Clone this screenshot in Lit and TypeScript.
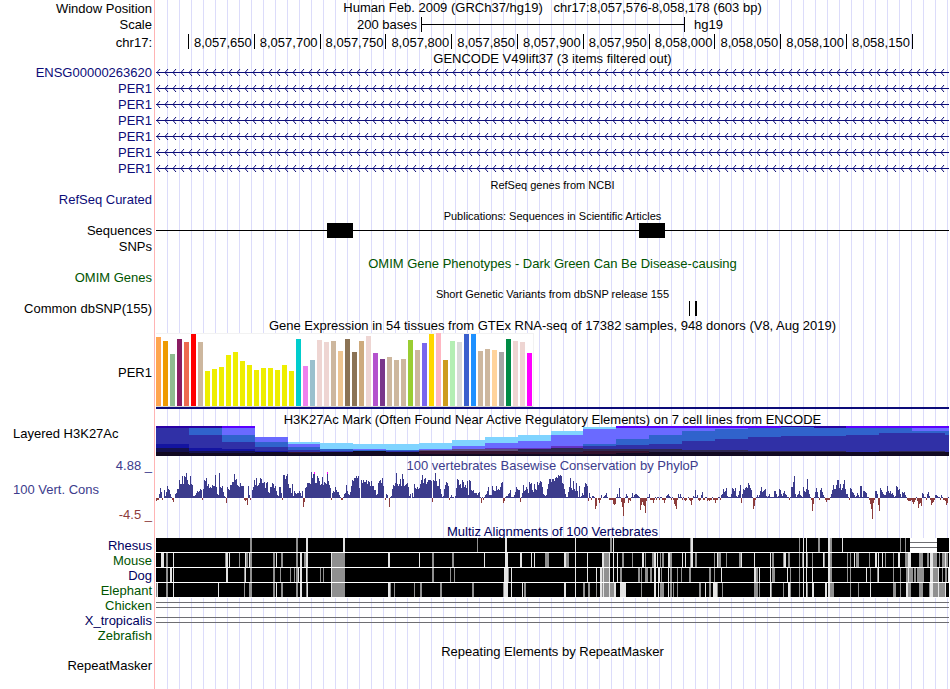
import { LitElement, html, svg, css, nothing, type TemplateResult } from "lit";
import { customElement } from "lit/decorators.js";

/** Left edge of the data area in image coordinates, and its width in base units. */
const LEFT = 156;
const SPAN = 793;

const GENES = ["ENSG00000263620", "PER1", "PER1", "PER1", "PER1", "PER1", "PER1"];

const POSITIONS = [
  "8,057,650", "8,057,700", "8,057,750", "8,057,800", "8,057,850", "8,057,900",
  "8,057,950", "8,058,000", "8,058,050", "8,058,100", "8,058,150",
];

/** GTEx tissues: median expression and tissue colour. */
const TISSUES: [number, string][] = [
  [69, "#ffa54f"], [65, "#ee9a00"], [52, "#8fbc8f"], [67, "#8b1c62"], [64, "#ee6a50"], [72, "#ff0000"],
  [64, "#cdb79e"], [35, "#eeee00"], [37, "#eeee00"], [39, "#eeee00"], [51, "#eeee00"], [54, "#eeee00"],
  [45, "#eeee00"], [41, "#eeee00"], [36, "#eeee00"], [38, "#eeee00"], [38, "#eeee00"], [36, "#eeee00"],
  [41, "#eeee00"], [35, "#eeee00"], [67, "#00cdcd"], [40, "#ee82ee"], [46, "#9ac0cd"], [66, "#eed5d2"],
  [64, "#eed5d2"], [65, "#cdb79e"], [55, "#eec591"], [67, "#8b7355"], [54, "#8b7355"], [65, "#cdaa7d"],
  [70, "#eed5d2"], [53, "#b452cd"], [47, "#7a378b"], [49, "#cdb79e"], [46, "#cdb79e"], [47, "#cdb79e"],
  [66, "#9acd32"], [56, "#cdb79e"], [63, "#7a67ee"], [72, "#ffd700"], [73, "#ffb6c1"], [46, "#cd9b1d"],
  [65, "#b4eeb4"], [64, "#d9d9d9"], [72, "#3a5fcd"], [72, "#1e90ff"], [55, "#cdb79e"], [57, "#cdb79e"],
  [56, "#ffd39b"], [54, "#a6a6a6"], [67, "#008b45"], [65, "#eed5d2"], [64, "#eed5d2"], [53, "#ff00ff"],
];

/** Colours of the overlapping H3K27Ac cell-line signals. */
const INK: Record<string, string> = {
  s: "#80d4ff", v: "#6a6aff", b: "#3063cc", n: "#3030a6", d: "#1414a0", k: "#15124e",
  p: "#5c00ff", q: "#2a00a4", g: "#5c4f7c", m: "#6432c4", w: "#2e2850", r: "#34122e", x: "#120a22",
};

/** Each bin: start, then layers as colour + top, each running down to the next one. */
const H3K = [
  "156 q0 n2 d18 k22 x26", "189 q0 b2 n9 d22 k25 x27", "222 p0 v2 b9 n16 d23 k25 x27",
  "255 v11 b16 n21 d25 x26", "288 s16 v18 b21 n24 r26 x27", "320 s17 b23 n25 x26",
  "353 s18 v23 b24 x25", "386 s18 b24 n25 x26", "419 s17 v23 g24 r25 x28",
  "452 s14 v20 g23 r25 x28", "485 s11 v17 m22 g23 r25 x28", "518 s9 v15 m22 w23 r26 x28",
  "551 s5 v9 m20 w22 r26 x28", "583 s1 v3 b18 n20 w23 r25 x28", "616 p0 v2 b13 n19 w23 r25 x27",
  "649 p0 v2 b9 n18 w23 x26", "682 p0 v2 b5 n15 w24 x26", "715 p0 v2 b3 n13 w24 x26",
  "748 p0 b2 n11 w25 x26", "781 q0 b1 n10 w25 x26", "814 q0 b2 n10 w25 x26",
  "846 p0 b2 n9 x26", "879 p0 b2 n7 w25 x26", "912 p0 v2 b5 n7 w25 x26", "945 p0 v2 b5 n9 x26",
];

/** PhyloP score per base, in pixels above or below zero. */
const PHYLOP = `
-2 -1 -1 4 10 6 -1 0 8 2 6 12 9 8 4 1 -1 -3 0 4 5 9 9 18 14 14 22 14 22 21
25 18 14 13 22 14 13 2 2 3 5 7 6 7 9 8 -1 9 18 17 20 12 14 10 11 10 13 12 12 23
11 4 3 25 11 10 12 6 2 1 -4 11 9 8 13 13 16 16 24 18 19 13 12 11 15 12 12 12 -1 -2
-1 -6 12 3 -1 0 8 11 18 13 20 12 13 15 20 19 15 15 16 10 15 16 6 5 11 11 15 14 10 12
7 3 2 11 11 5 -1 23 23 19 22 24 14 10 10 5 14 2 7 5 4 5 5 7 5 2 7 -8 -3 10
11 15 15 15 14 26 20 24 24 15 15 22 20 17 13 14 21 13 16 15 14 26 17 13 10 -1 5 7 6 11
8 6 6 3 1 -1 -1 1 4 5 13 7 4 3 6 12 18 17 20 20 22 20 22 10 0 18 15 18 16 16
18 14 17 16 12 17 12 12 8 8 3 4 15 17 18 15 20 12 0 -1 4 3 0 -8 1 2 9 13 12 15
25 14 12 14 19 12 24 19 12 13 14 15 11 2 4 0 5 1 14 10 9 11 9 10
14 18 23 15 19 20 14 16 18 18 18 17 -3 18 17 25 17 12 12 19 9 4 1 2 9 13 16 15 12 -1
1 3 1 1 0 2 10 19 18 13 14 10 18 16 11 13 10 17 3 18 17 8 7 8 5 5 5 3 5 6
1 -4 1 -1 1 3 4 7 11 3 3 3 12 8 7 7 12 8 9 8 11 15 16 -4 -2 1 2 2 4 5
8 1 1 1 3 6 11 9 8 8 -3 1 5 13 7 8 11 9 5 16 14 15 8 6 14 9 8 16 13 15
17 16 11 4 3 2 3 9 14 19 19 16 19 19 17 20 21 20 23 22 23 22 15 14 9 4 1 1 6 11
20 10 8 17 9 7 15 7 1 12 1 2 5 3 11 15 14 12 -2 5 1 -1 2 2 1 -10 -7 0 -1 -4
-1 3 0 1 2 3 5 1 0 -1 -1 -1 -1 -5 -6 -5 1 4 1 10 1 -3 -8 -17 -4 1 4 2 -4 -1
-2 1 5 1 3 4 4 3 2 1 -11 -6 -3 -6 -7 -14 -2 1 1 4 -1 -1 -1 -4 -1 1 -1 1 1 -1
1 1 -1 -1 -4 -1 2 3 4 2 1 -1 1 -1 -5 -7 -10 -1 4 1 4 1 -1 1 -1 -2 -1 0 1 -1
-2 -6 -1 2 1 8 1 3 -1 -2 -1 3 6 -1 -1 1 1 -2 -1 -2 -1 -1 1 -1 -1 -4 -1 -1 1 1
-1 3 4 9 6 7 10 2 1 1 1 4 10 9 7 10 2 1 3 7 13 -4 4 9 8 10 11 10 15 13
10 8 1 -10 -7 -1 1 3 1 3 7 11 6 7 8 9 2 1 2 4 1 1 1 1 7 7 4 1 2 9
8 4 2 5 7 4 3 1 1 -1 1 11 11 16 22 4 1 3 4 7 3 2 1 11 7 6 9 19 8 4
1 -1 -12 -5 1 6 10 6 1 -1 8 10 6 3 1 -1 -3 -1 -1 -1 1 4 8 13 9 9 13 18 18 10
14 8 10 14 18 9 4 4 1 -1 10 9 6 5 3 1 2 5 3 1 12 12 1 7 7 6 5 1 1 -1
-5 -10 -20 -4 -1 7 7 4 -6 -12 10 8 6 4 3 3 6 12 7 5 7 4 5 3 1 2 12 11 8 9
4 1 6 5 6 3 1 -1 -2 -2 -2 -1 -3 -5 -3 -1 1 -2 -9 -5 -4 -7 5 4 1 1 -1 4 6 2
-1 -6 -4 -3 -1 3 3 2 1 1 -1 3 1 -1 -1 -2 -6 -4 1`.trim().split(/\s+/).map(Number);

/** Bases whose score runs past the top of the view. */
const CLIPPED = [314, 327];

/** Multiz conservation gaps: start, shade (g grey, l light, w blank) and width. */
const SPECIES: { name: string; tone: string; marks?: string; lines?: boolean }[] = [
  { name: "Rhesus", tone: "deep", marks: `250g2 296g2 306l2 343l2 477g1 505l2 575l1 610g2 613l1 690g1 691l2 799g1
    803l1 806l1 818g2 828l2 830g2 842l1 900g1 905g1 910w27` },
  { name: "Mouse", tone: "green", marks: `161l3 166g2 173l1 225g1 226l2 229l1 239g1 245l1 246g2 249l1 250g2 273g2
    276l1 281g2 296g2 300l2 304g2 306l2 331l1 332g13 388l2 419l1 432g2 452g2 484l1 505l3 520l2 531l1 534l1
    545g4 564l2 566g3 575l1 587l1 602l2 604g5 609l1 613l1 617l1 622g2 632g1 642l2 645g1 652g2 654l2 657l1
    660g1 662g2 668l2 670g2 682l1 685l1 690g1 691l2 695g2 714g1 717l1 718g3 726g1 739g2 741l1 754l1 770l1
    772g2 783g1 784l2 788g2 799g1 802g1 803l1 806l1 807g1 812g1 823l1 824g1 828l2 830g2 847g1 850g1 854l1
    856g3 869g1 875l2 878l1 882l1 885g1 893g1 898l2 905g1 906g2 908l3 919g4 927g2 930l3 933g4 939g1 942g3
    945l1 946g2` },
  { name: "Dog", tone: "deep", marks: `166g2 170l2 173l1 226l2 244g1 245l1 250g2 273g2 280g1 290g1 294g1 296g2 298l1
    300l2 306l1 307g1 320g1 323g1 331l1 332g13 432g2 450g1 454g1 504l4 508g1 511l1 575l1 587l1 596l1 600l2
    602g1 603l1 604g5 609l1 613l1 617l1 620g2 638g2 641g1 645g3 650g2 654l2 658l2 661g1 668l1 670g2 677g1
    681g1 689g2 709g2 714g1 721l1 754l2 756g2 759l1 770l1 772g3 787l1 790g1 799g1 803l1 806l1 812l1 828l2
    830g2 847g1 850g1 866l1 870g1 877g1 878l1 893g1 900g1 906g2 908l1 909g4 914g2 917g7 930l3 933g5 938l1
    942g1 945g2 948l1` },
  { name: "Elephant", tone: "green", marks: `156g1 157l1 166g2 173l1 218l1 244g1 249g3 273g2 276l1 281g2 296g2 300l2
    306g1 307l1 331l1 332g13 388l2 390g1 394g1 414g1 420g2 440g2 472g2 503g1 504l4 511l1 522l1 524g2 564l2
    575l1 583g2 588g2 596g1 600l2 602g1 603l1 604g5 609l1 610g4 614l2 620l6 641g1 654l2 658l1 660g1 661g3
    668l1 670g2 673g1 677g1 699g2 705l1 709g2 713l4 717g1 722g1 754g4 759g1 770l1 771g1 783g1 788l2 790g1
    799g1 803l1 806l1 807g1 812l2 825l2 828l2 830g4 850g1 858g1 870l1 893g3 900g1 906l2 908g3 919g4 929g1
    930l3 933g5 938l1 939g6 945l1` },
  { name: "Chicken", tone: "green", lines: true },
  { name: "X_tropicalis", tone: "deep", lines: true },
  { name: "Zebrafish", tone: "green" },
];

const SHADE: Record<string, string> = { g: "#909090", l: "#e4e4e4", w: "#ffffff" };

const box = (x: number, y: number, w: number, h: number) => `M${x} ${y}h${w}v${h}h${-w}z`;

const arrows = (() => {
  let d = "";
  for (let x = 0; x < SPAN; x += 8) d += `M${x + 4} 5L${x + 1} 8.5L${x + 4} 12`;
  return d;
})();

const bars = (positive: boolean) =>
  PHYLOP.map((v, i) => {
    if (positive ? v <= 0 : v >= 0) return "";
    return positive ? box(i, 26 - v, 1, v) : box(i, 26, 1, 1 - v);
  }).join("");

@customElement("app-root")
export class AppRoot extends LitElement {
  static styles = css`
    :host {
      display: block;
      min-height: 100vh;
      box-sizing: border-box;
      padding-right: 1px;
      font: 13px/18px "Liberation Sans", Arial, sans-serif;
      color: #000;
      background:
        linear-gradient(#ffb4b4, #ffb4b4) 154px 0 / 1px 100% no-repeat,
        repeating-linear-gradient(90deg, transparent 0 11px, #dcdcfa 11px 12px) 156px 0 / 100% 100% no-repeat,
        #fff;
    }
    .row {
      display: grid;
      grid-template-columns: 156px minmax(0, 1fr);
      grid-template-rows: minmax(0, 1fr);
      height: 16px;
      white-space: nowrap;
    }
    .label {
      padding-right: 4px;
      text-align: right;
    }
    .left {
      padding-left: 13px;
      text-align: left;
    }
    .title {
      text-align: center;
      white-space: pre;
    }
    svg {
      display: block;
      width: 100%;
      height: 100%;
      shape-rendering: crispEdges;
    }
    .smooth { shape-rendering: auto; }
    .position .title { line-height: 16px; }
    .ruler { height: 17px; }
    .coords { line-height: 20px; }
    .tight { line-height: 16px; }
    .head { height: 14px; }
    .small { height: 15px; }
    .small .title { font-size: 11px; }
    .spaced { line-height: 20px; }
    .gtex { height: 78px; line-height: 80px; }
    .caption { height: 15px; }
    .signal { height: 30px; line-height: 16px; }
    .phylop { height: 53px; }
    .phylop .left { padding-top: 9px; }
    .phylop .scale-end { display: flex; flex-direction: column; gap: 7px; }
    .scale-end .min { text-align: right; }
    .multiz-title { height: 13px; line-height: 14px; }
    .species { height: 15px; line-height: 15px; }
    .navy { color: #0c0c78; }
    .deep { color: #000060; }
    .green { color: #005400; }
    .cons { color: #3c3c8c; }
    .min { color: #8c3c3c; }
    .scale {
      display: grid;
      grid-template-columns: 265fr 264fr 264fr;
      line-height: 17px;
    }
    .scale .from { padding-right: 4px; text-align: right; }
    .scale .to { padding-left: 9px; }
    .span {
      display: flex;
      align-items: center;
      height: 15px;
      margin-top: 1px;
      border: solid #000;
      border-width: 0 1px;
    }
    .span::before { content: ""; flex: 1; height: 1px; background: #000; }
    .axis {
      display: grid;
      grid-template-columns: 330fr repeat(11, 658fr) 361fr;
    }
    .tick {
      height: 15px;
      margin-top: 1px;
      padding-right: 2px;
      line-height: 17px;
      border-right: 1px solid #000;
      text-align: right;
    }
  `;

  private row(kind: string, label: unknown, tone: string, data: unknown) {
    return html`<div class="row ${kind}">
      <div class="label ${tone}">${label}</div>
      ${data}
    </div>`;
  }

  private title(kind: string, text: string, tone = "", label: unknown = nothing, labelTone = "") {
    return this.row(kind, label, labelTone, html`<div class="title ${tone}">${text}</div>`);
  }

  private plot(height: number, body: TemplateResult | TemplateResult[], kind = "") {
    return html`<svg class=${kind} viewBox="0 0 ${SPAN} ${height}" preserveAspectRatio="none" aria-hidden="true">${body}</svg>`;
  }

  private gene() {
    return this.plot(16, svg`<path d=${box(0, 8, SPAN, 1)} fill="#0c0c78" />
      <path d=${arrows} fill="none" stroke="#0c0c78" stroke-width="1" />`, "smooth");
  }

  private expression() {
    return this.plot(78, svg`
      <path d=${box(0, 0, 378, 74)} fill="#f2f2f2" />
      <path d=${box(0, 1, 377, 72)} fill="#fff" />
      <path d=${box(0, 73, 377, 1)} fill="#d4d4d4" />
      ${TISSUES.map(([h, c], i) => svg`<path d=${box(i * 7, 73 - h, 5, h)} fill=${c} />`)}
      <path d=${box(0, 74, SPAN, 2)} fill="#0c0c78" />`);
  }

  private acetylation() {
    return this.plot(30, H3K.map((bin, i) => {
      const [start, ...layers] = bin.split(" ");
      const x = Number(start) - LEFT;
      const end = i + 1 < H3K.length ? parseInt(H3K[i + 1]) - LEFT : SPAN;
      return svg`${layers.map((layer) => {
        const top = Number(layer.slice(1));
        return svg`<path d=${box(x, top, end - x, 30 - top)} fill=${INK[layer[0]]} />`;
      })}`;
    }));
  }

  private conservation() {
    return this.plot(53, svg`
      <path d=${bars(true)} fill="#3c3c8c" />
      <path d=${bars(false)} fill="#8c3c3c" />
      <path d=${CLIPPED.map((x) => box(x - LEFT, 0, 1, 2)).join("")} fill="#ff00ff" />`);
  }

  private alignment(marks?: string, lines?: boolean) {
    if (lines) return this.plot(15, svg`<path d=${box(0, 4, SPAN, 1) + box(0, 9, SPAN, 1)} fill="#6e6e72" />`);
    if (!marks) return html`<div></div>`;
    return this.plot(15, svg`
      <path d=${box(0, 0, SPAN, 15)} fill="#fff" />
      <path d=${box(0, 0, SPAN, 14)} fill="#000" />
      ${marks.trim().split(/\s+/).map((mark) => {
        const [, x, shade, w] = /(\d+)([glw])(\d+)/.exec(mark)!;
        const at = Number(x) - LEFT;
        return svg`<path d=${box(at, 0, Number(w), 14)} fill=${SHADE[shade]} />
          ${shade === "w" ? svg`<path d=${box(at, 4, Number(w), 1) + box(at, 9, Number(w), 1)} fill="#6e6e72" />` : nothing}`;
      })}`);
  }

  render() {
    return html`
      ${this.title("position", "Human Feb. 2009 (GRCh37/hg19)   chr17:8,057,576-8,058,178 (603 bp)", "", "Window Position")}
      ${this.row("ruler", "Scale", "", html`<div class="scale">
        <div class="from">200 bases</div><div class="span"></div><div class="to">hg19</div>
      </div>`)}
      ${this.row("ruler coords", "chr17:", "", html`<div class="axis">
        <div class="tick"></div>${POSITIONS.map((p) => html`<div class="tick">${p}</div>`)}
      </div>`)}
      ${this.title("head", "GENCODE V49lift37 (3 items filtered out)")}
      ${GENES.map((g) => this.row("", g, "navy", this.gene()))}
      ${this.title("small", "RefSeq genes from NCBI")}
      ${this.row("", "RefSeq Curated", "navy", nothing)}
      ${this.title("small", "Publications: Sequences in Scientific Articles")}
      ${this.row("", "Sequences", "", this.plot(16, svg`<path d=${box(0, 8, SPAN, 1) + box(171, 1, 26, 15) + box(483, 1, 26, 15)} />`))}
      ${this.row("", "SNPs", "", nothing)}
      ${this.title("spaced", "OMIM Gene Phenotypes - Dark Green Can Be Disease-causing", "green")}
      ${this.row("tight", "OMIM Genes", "green", nothing)}
      ${this.title("small tight", "Short Genetic Variants from dbSNP release 155")}
      ${this.row("tight", "Common dbSNP(155)", "", this.plot(16, svg`<path d=${box(533, 0, 1, 15) + box(539, 0, 2, 15)} />`))}
      ${this.title("", "Gene Expression in 54 tissues from GTEx RNA-seq of 17382 samples, 948 donors (V8, Aug 2019)")}
      ${this.row("gtex", "PER1", "", this.expression())}
      ${this.title("caption", "H3K27Ac Mark (Often Found Near Active Regulatory Elements) on 7 cell lines from ENCODE")}
      ${this.row("signal", "Layered H3K27Ac", "left", this.acetylation())}
      ${this.title("spaced", "100 vertebrates Basewise Conservation by PhyloP", "cons", "4.88 _", "cons")}
      ${this.row("phylop", html`<div>100 Vert. Cons</div><div class="min">-4.5 _</div>`, "left scale-end cons", this.conservation())}
      ${this.title("multiz-title", "Multiz Alignments of 100 Vertebrates", "deep")}
      ${SPECIES.map((s) => this.row("species", s.name, s.tone, this.alignment(s.marks, s.lines)))}
      ${this.title("caption", "Repeating Elements by RepeatMasker")}
      ${this.row("tight", "RepeatMasker", "", nothing)}
    `;
  }
}
